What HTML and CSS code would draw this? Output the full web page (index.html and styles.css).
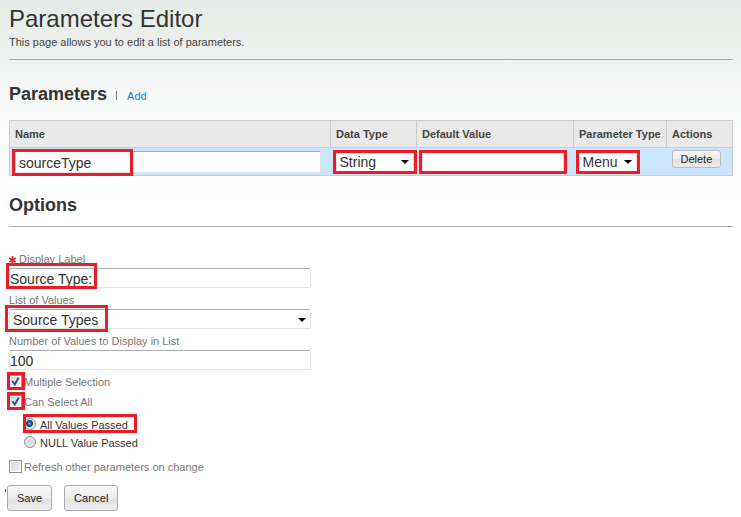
FILE: index.html
```html
<!DOCTYPE html>
<html lang="en">
<head>
  <title>Parameters Editor</title>
  <meta charset="UTF-8" />
  <meta name="viewport" content="width=device-width, initial-scale=1.0" />
  <link rel="stylesheet" href="styles.css">
</head>
<body>

  <header class="page-header">
    <h1>Parameters Editor</h1>
    <p>This page allows you to edit a list of parameters.</p>
  </header>

  <div class="section-title">
    <h2>Parameters</h2>
    <a href="#" class="add-link">Add</a>
  </div>

  <table class="params">
    <colgroup>
      <col>
      <col class="col-data">
      <col class="col-default">
      <col class="col-type">
      <col class="col-actions">
    </colgroup>
    <thead>
      <tr>
        <th>Name</th>
        <th>Data Type</th>
        <th>Default Value</th>
        <th>Parameter Type</th>
        <th>Actions</th>
      </tr>
    </thead>
    <tbody>
      <tr>
        <td>
          <div class="control name-control">
            <input type="text" class="box" value="sourceType" aria-label="Name">
            <span class="mark mark-name"></span>
          </div>
        </td>
        <td>
          <div class="control dropdown data-control">
            <select class="box" aria-label="Data Type"><option>String</option></select>
            <span class="mark"></span>
          </div>
        </td>
        <td>
          <div class="control default-control">
            <input type="text" class="box" value="" aria-label="Default Value">
            <span class="mark"></span>
          </div>
        </td>
        <td>
          <div class="control dropdown type-control">
            <select class="box" aria-label="Parameter Type"><option>Menu</option></select>
            <span class="mark"></span>
          </div>
        </td>
        <td class="actions-cell"><button type="button" class="btn btn-small">Delete</button></td>
      </tr>
    </tbody>
  </table>

  <h2 class="options-title">Options</h2>

  <form class="options">
    <div class="field">
      <label for="displayLabel">
        <svg class="required" viewBox="0 0 7 8" width="7" height="8"><path d="M3.5 0v8M0.3 2l6.4 4M0.3 6l6.4-4" stroke="#e02020" stroke-width="1.6" fill="none"/></svg>
        Display Label
      </label>
      <div class="control">
        <input type="text" id="displayLabel" class="box" value="Source Type:">
        <span class="mark mark-label"></span>
      </div>
    </div>
    <div class="field">
      <label for="valueList">List of Values</label>
      <div class="control dropdown">
        <select id="valueList" class="box"><option>Source Types</option></select>
        <span class="mark mark-list"></span>
      </div>
    </div>
    <div class="field">
      <label for="valueCount">Number of Values to Display in List</label>
      <div class="control">
        <input type="text" id="valueCount" class="box" value="100">
      </div>
    </div>

    <!-- Selection rules -->
    <div class="check-row">
      <span class="tick"><input type="checkbox" id="multiple" checked><span class="mark"></span></span>
      <label for="multiple">Multiple Selection</label>
    </div>
    <div class="check-row">
      <span class="tick"><input type="checkbox" id="selectAll" checked><span class="mark"></span></span>
      <label for="selectAll">Can Select All</label>
    </div>
    <div class="radios">
      <div class="radio-row">
        <input type="radio" id="allValues" name="passed" checked>
        <label for="allValues">All Values Passed</label>
        <span class="mark mark-radio"></span>
      </div>
      <div class="radio-row">
        <input type="radio" id="nullValue" name="passed">
        <label for="nullValue">NULL Value Passed</label>
      </div>
    </div>
    <div class="check-row">
      <span class="tick"><input type="checkbox" id="refresh"></span>
      <label for="refresh">Refresh other parameters on change</label>
    </div>

    <div class="form-actions">
      <button type="button" class="btn">Save</button>
      <button type="button" class="btn">Cancel</button>
    </div>
  </form>

</body>
</html>
```

FILE: styles.css
```css
* {
  box-sizing: border-box;
}
body {
  margin: 0;
  padding: 5px 8px 5px 9px;
  font-family: Arial, "Liberation Sans", sans-serif;
  font-size: 11px;
  color: #333;
  background: #fff linear-gradient(#e5eae8, #ebeeeb 30px, #f8f9f9 110px, #fff 200px) no-repeat;
}
h1, h2, p {
  margin: 0;
}
h1 {
  font-size: 24px;
  font-weight: normal;
  line-height: 28px;
}
h2 {
  font-size: 18px;
  line-height: 22px;
}
.page-header {
  padding-bottom: 10px;
  border-bottom: 1px solid #aaa;
}
.page-header p {
  padding-top: 2px;
  line-height: 14px;
  color: #444;
}
.section-title {
  display: flex;
  align-items: center;
  gap: 9px;
  padding: 23px 0 15px;
}
.add-link {
  padding-left: 11px;
  line-height: 10px;
  margin-top: 3px;
  color: #0a84d8;
  text-decoration: none;
  background: linear-gradient(#777, #777) left top / 1px 9px no-repeat;
}

/* Parameter table */
.params {
  width: 100%;
  table-layout: fixed;
  border-collapse: collapse;
}
.col-data { width: 86px; }
.col-default { width: 157px; }
.col-type { width: 93px; }
.col-actions { width: 66px; }
.params th {
  height: 27px;
  padding: 0 5px;
  border: 1px solid #ccc;
  background: #e9e9e9;
  color: #444;
  text-align: left;
  white-space: nowrap;
}
.params td {
  height: 28px;
  padding: 0 5px;
  background: #cce5ff;
}
.params tbody tr {
  border: 1px solid #ccc;
}
.params .actions-cell {
  padding-bottom: 6px;
}
.name-control {
  margin-right: 5px;
}
.data-control {
  width: 78px;
}
.default-control {
  width: 142px;
}
.type-control {
  width: 58px;
}

/* Text boxes and drop-downs */
.control {
  position: relative;
}
.box {
  display: block;
  width: 100%;
  height: 20px;
  margin: 0;
  padding: 2px 2px 0 0;
  border: 1px solid #dfe2e8;
  border-top-color: #a9a9ae;
  border-radius: 2px;
  background: #fff;
  color: #333;
  font-family: inherit;
  font-size: 14px;
  line-height: 17px;
  appearance: none;
}
.params .box {
  height: 22px;
  padding-left: 3px;
}
.dropdown::after {
  content: "";
  position: absolute;
  right: 5px;
  top: 9px;
  border: 4px solid transparent;
  border-top-color: #000;
  border-bottom: 0;
}

/* Red highlight frames */
.mark {
  position: absolute;
  inset: -1px -3px;
  border: 3px solid #ed1c24;
  pointer-events: none;
}
.mark-name {
  inset: -2px auto -3px -3px;
  width: 121px;
}
.mark-label {
  inset: -5px auto -1px -3px;
  width: 91px;
}
.mark-list {
  inset: -4px auto -3px -4px;
  width: 103px;
}
.mark-radio {
  inset: -1px auto 0 -1px;
  width: 114px;
}

/* Options form */
.options-title {
  padding: 18px 0 10px;
  border-bottom: 1px solid #aaa;
}
.options {
  padding-top: 20px;
}
.field {
  max-width: 302px;
}
.field label {
  display: block;
  padding-top: 3px;
  line-height: 18px;
  color: #777;
}
.field .dropdown .box {
  padding-left: 3px;
}
.required {
  vertical-align: -1px;
}
.check-row {
  display: flex;
  align-items: center;
  gap: 2px;
  height: 20px;
  color: #777;
}
.check-row label {
  padding-top: 2px;
}
.tick {
  position: relative;
  display: flex;
}
.check-row input {
  width: 13px;
  height: 13px;
  margin: 0;
  padding: 1px;
  border: 1px solid #8e8f8f;
  background: linear-gradient(135deg, #cfd3d8, #f6f6f6) content-box #fff;
  appearance: none;
}
.field + .check-row {
  margin-top: 1px;
}
.check-row input:checked {
  background:
    url("data:image/svg+xml,%3Csvg xmlns='http://www.w3.org/2000/svg' viewBox='0 0 11 11'%3E%3Cpath d='M2.5 5.2l2.3 3.3L8.6 1.8' fill='none' stroke='%233a4c90' stroke-width='2'/%3E%3C/svg%3E") center / 11px 11px no-repeat,
    linear-gradient(135deg, #cfd3d8, #f6f6f6) content-box #fff;
}
.tick .mark {
  inset: -3px -3px -2px -2px;
}
.radios {
  padding: 4px 0 5px 15px;
}
.radio-row {
  position: relative;
  display: flex;
  align-items: center;
  gap: 4px;
  height: 18px;
}
.radio-row label {
  padding-top: 2px;
}
.radio-row input {
  width: 12px;
  height: 12px;
  margin: 0;
  border: 1px solid #8e8f8f;
  border-radius: 50%;
  background: radial-gradient(circle, #d0d0d0, #f4f4f4);
  appearance: none;
}
.radio-row input:checked {
  background: radial-gradient(circle at 45% 45%, #5fc8f0 0, #1d5a8c 2px, #123c66 3px, #eee 4px);
}

/* Buttons */
.btn {
  height: 26px;
  padding: 0 9px;
  border: 1px solid #aaa;
  border-radius: 3px;
  background: linear-gradient(#f6f6f6, #eee 50%, #e2e2e2 54%, #ececec);
  color: #222;
  font-family: inherit;
  font-size: 11px;
}
.btn-small {
  display: block;
  height: 18px;
  padding: 0 8px;
  border-color: #bbb;
}
.form-actions {
  position: relative;
  display: flex;
  gap: 12px;
  margin: 9px 0 0 -2px;
}
.form-actions::before {
  content: "";
  position: absolute;
  left: -2px;
  top: 4px;
  width: 1px;
  height: 3px;
  background: #444;
}
```
